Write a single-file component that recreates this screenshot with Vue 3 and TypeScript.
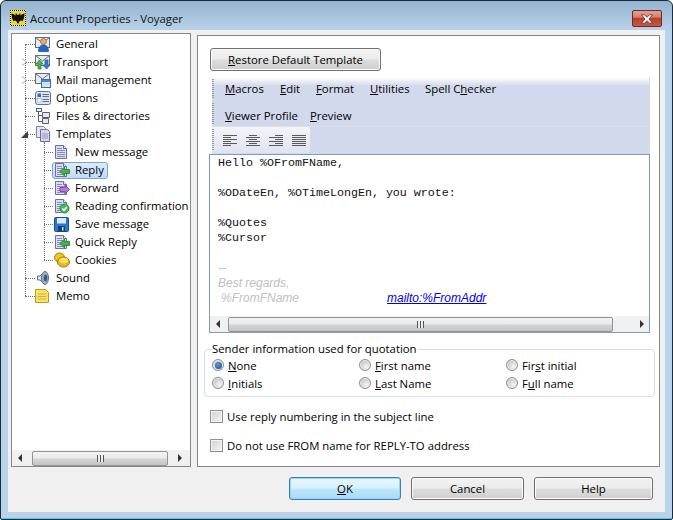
<script setup lang="ts">
interface Row { label: string; icon: string; level: number; arrow?: 'closed' | 'open'; selected?: boolean }
const rows: Row[] = [
  { label: 'General', icon: 'general', level: 0 },
  { label: 'Transport', icon: 'transport', level: 0, arrow: 'closed' },
  { label: 'Mail management', icon: 'mail', level: 0, arrow: 'closed' },
  { label: 'Options', icon: 'options', level: 0 },
  { label: 'Files & directories', icon: 'files', level: 0 },
  { label: 'Templates', icon: 'templates', level: 0, arrow: 'open' },
  { label: 'New message', icon: 'new', level: 1 },
  { label: 'Reply', icon: 'reply', level: 1, selected: true },
  { label: 'Forward', icon: 'forward', level: 1 },
  { label: 'Reading confirmation', icon: 'confirm', level: 1 },
  { label: 'Save message', icon: 'save', level: 1 },
  { label: 'Quick Reply', icon: 'quick', level: 1 },
  { label: 'Cookies', icon: 'cookies', level: 1 },
  { label: 'Sound', icon: 'sound', level: 0 },
  { label: 'Memo', icon: 'memo', level: 0 },
]
const docIcons = ['new', 'reply', 'forward', 'confirm', 'quick']
const alignments = [
  [14, 8, 14, 8, 14, 8],
  [8, 14, 8, 14, 8, 14],
  [8, 14, 8, 14, 8, 14],
  [14, 14, 14, 14, 14, 14],
]
const alignX = [0, 1, 2, 0]
</script>

<template>
  <div class="window">
    <header class="titlebar">
      <svg class="appicon" width="16" height="16" viewBox="0 0 16 16">
        <rect width="16" height="16" fill="#fff" />
        <path d="M0 0h1v1H0zM2 0h1v1H2zM4 0h1v1H4zM6 0h1v1H6zM8 0h1v1H8zM10 0h1v1h-1zM12 0h1v1h-1zM14 0h1v1h-1zM0 2h1v1H0zM0 4h1v1H0zM0 6h1v1H0zM0 8h1v1H0zM0 10h1v1H0zM0 12h1v1H0zM0 14h1v1H0zM15 1h1v1h-1zM15 3h1v1h-1zM15 5h1v1h-1zM15 7h1v1h-1zM15 9h1v1h-1zM15 11h1v1h-1zM15 13h1v1h-1zM15 15h1v1h-1zM1 15h1v1H1zM3 15h1v1H3zM5 15h1v1H5zM7 15h1v1H7zM9 15h1v1H9zM11 15h1v1h-1zM13 15h1v1h-1z" fill="#1a1a1a" />
        <rect x="1" y="1" width="14" height="14" fill="#f0d81c" />
        <path d="M1.500 3.500c2 0 3 1 3.800 2.200L6 2.800l1 2h2l1-2 .7 2.900c.8-1.200 1.800-2.200 3.800-2.200 0 3.800-1 6-2 7.700-1-.8-2-.8-2.800 0L8 14l-1.700-2.800c-.8-.8-1.800-.8-2.800 0-1-1.700-2-3.900-2-7.700z" fill="#111" />
      </svg>
      <span class="title">Account Properties - Voyager</span>
      <span class="close">
        <svg width="14" height="10" viewBox="0 0 14 10">
          <path d="M1.500 .8h3L7 3.300 9.500 .8h3L9 5l3.500 4.200h-3L7 6.700 4.500 9.200h-3L5 5z" fill="#fff" stroke="#5a2a28" stroke-width=".8" />
        </svg>
      </span>
    </header>

    <div class="client">
      <div class="panes">
        <aside class="tree">
          <div class="tree-rows">
            <span class="vline vline-root"></span>
            <span class="vline vline-child"></span>
            <div v-for="r in rows" :key="r.label" class="row" :class="{ child: r.level === 1 }">
              <span class="hline"></span>
              <span v-if="r.arrow" class="arrow" :class="r.arrow"></span>
              <span class="item" :class="{ selected: r.selected }">
                <svg class="ico" width="16" height="16" viewBox="0 0 16 16">
                  <g v-if="docIcons.includes(r.icon)">
                    <path d="M1.500 1.500h8l3 3v10h-11z" fill="#dcdcf0" stroke="#6b6f9c" />
                    <path d="M9.500 1.500v3h3" fill="#f4f4fb" stroke="#6b6f9c" />
                    <path d="M3 4.500h5M3 6.500h8M3 8.500h8M3 10.500h8M3 12.500h8" stroke="#8a8db8" />
                  </g>
                  <path v-if="r.icon === 'reply' || r.icon === 'quick'" d="M6 9.500l4.500-4.500v2.500H15.500v4h-5v2.500z" fill="#3fb53f" stroke="#1e7a2a" stroke-width=".8" />
                  <path v-if="r.icon === 'forward'" d="M15.500 9.500L11 5v2.500H6v4h5v2.500z" fill="#b678d8" stroke="#75389a" stroke-width=".8" />
                  <g v-if="r.icon === 'confirm'">
                    <circle cx="10.500" cy="10.500" r="4.500" fill="#4cb85a" stroke="#2a8a3c" />
                    <path d="M8.300 10.500l1.700 1.800 2.900-3.300" fill="none" stroke="#fff" stroke-width="1.500" />
                  </g>
                  <g v-if="r.icon === 'save'">
                    <rect x=".5" y="1.500" width="14" height="14" rx="1" fill="#2a78c8" stroke="#174f92" />
                    <rect x="3" y="2" width="9" height="5.500" fill="#dbe9f8" />
                    <rect x="4" y="10" width="7" height="5.500" fill="#0f3f80" />
                    <rect x="8" y="11" width="1.500" height="3.500" fill="#cde" />
                  </g>
                  <g v-if="r.icon === 'cookies'">
                    <ellipse cx="5.500" cy="5.500" rx="5" ry="4.500" fill="#f3c61e" stroke="#a5780a" />
                    <ellipse cx="9.500" cy="10" rx="6" ry="5" fill="#eeb911" stroke="#a5780a" />
                    <ellipse cx="9.500" cy="8.500" rx="4.500" ry="2.800" fill="#fbe06a" />
                  </g>
                  <g v-if="r.icon === 'sound'">
                    <path d="M2.500 6h2.500l5-4.500v13L5 10H2.500z" fill="#dde5ee" stroke="#5b6f8c" />
                    <ellipse cx="10" cy="8" rx="3.500" ry="6.500" fill="#9fb2c8" stroke="#5b6f8c" />
                    <ellipse cx="10.500" cy="8" rx="1.800" ry="3.500" fill="#3d5a80" />
                  </g>
                  <g v-if="r.icon === 'memo'">
                    <path d="M.5 1.500h10l3 3v10H.5z" fill="#fbe26a" stroke="#c09a18" />
                    <path d="M2.500 6h9M2.500 8.500h9M2.500 11h9" stroke="#d8b030" />
                  </g>
                  <g v-if="r.icon === 'options'">
                    <rect x=".5" y="1.500" width="15" height="13" rx="2" fill="#dbe4ef" stroke="#5c7290" />
                    <rect x="2.500" y="3.500" width="3.500" height="3.500" fill="#3a70b8" />
                    <rect x="2.500" y="8.500" width="3.500" height="3.500" fill="#fff" stroke="#8aa" stroke-width=".5" />
                    <path d="M7.500 4.500h6.500M7.500 6.500h6.500M7.500 9.500h6.500M7.500 11.500h6.500" stroke="#5c7290" />
                  </g>
                  <g v-if="r.icon === 'files'">
                    <path d="M3.500 2v11.500h4M3.500 7.500h4" fill="none" stroke="#58606e" />
                    <rect x="1.500" y="0.500" width="5" height="3" fill="#eef1f6" stroke="#58606e" />
                    <path d="M7.500 4.500h7v5h-7z" fill="#e3e8f1" stroke="#58606e" />
                    <path d="M7.500 10.500h6v5h-6z" fill="#e3e8f1" stroke="#58606e" />
                  </g>
                  <g v-if="r.icon === 'templates'">
                    <path d="M1.500 .5h7l2 2v9h-9z" fill="#e7e7f4" stroke="#7a7ea6" />
                    <path d="M5.500 3.500h7l2 2v10h-9z" fill="#d6d7ec" stroke="#6b6f9c" />
                    <path d="M7 8h6M7 10h6M7 12h6" stroke="#9497c0" />
                  </g>
                  <g v-if="r.icon === 'general' || r.icon === 'transport' || r.icon === 'mail'">
                    <rect x=".5" y="1.500" width="14" height="10" fill="#e7ebf1" stroke="#626e7e" />
                    <path d="M.5 1.500l7 5.500 7-5.500" fill="none" stroke="#626e7e" />
                  </g>
                  <g v-if="r.icon === 'general'">
                    <circle cx="8.500" cy="5.500" r="3" fill="#eea765" stroke="#9a5a20" stroke-width=".7" />
                    <path d="M3.500 15.500c0-4.500 2-6.500 5-6.500s5 2 5 6.500z" fill="#1d6cc4" stroke="#124a8a" stroke-width=".7" />
                  </g>
                  <g v-if="r.icon === 'transport'">
                    <path d="M1 10l3.500-4L8 10H6v5H3v-5z" fill="#4cbb3a" stroke="#237a20" stroke-width=".7" />
                    <path d="M15 11l-3.500 4L8 11h2V6h3v5z" fill="#2f80d6" stroke="#1a5498" stroke-width=".7" />
                  </g>
                  <g v-if="r.icon === 'mail'">
                    <rect x="6.500" y="7.500" width="9" height="8" fill="#cfe2f6" stroke="#3e6ea8" />
                    <rect x="7" y="8" width="8" height="2" fill="#4f88c8" />
                  </g>
                </svg>
                <span class="lbl">{{ r.label }}</span>
              </span>
            </div>
          </div>
          <div class="hscroll">
            <span class="sarrow left"></span>
            <span class="thumb tree-thumb"><span class="grip"></span></span>
            <span class="sarrow right"></span>
          </div>
        </aside>

        <section class="panel">
          <button class="btn restore"><u>R</u>estore Default Template</button>

          <div class="bands">
            <nav class="band menu1">
              <span class="m m-macros"><u>M</u>acros</span>
              <span class="m m-edit"><u>E</u>dit</span>
              <span class="m m-format"><u>F</u>ormat</span>
              <span class="m m-util"><u>U</u>tilities</span>
              <span class="m">Spell C<u>h</u>ecker</span>
            </nav>
            <nav class="band menu2">
              <span class="m m-viewer"><u>V</u>iewer Profile</span>
              <span class="m"><u>P</u>review</span>
            </nav>
            <div class="toolband">
              <div class="toolbar">
                <svg v-for="(a, i) in alignments" :key="i" width="14" height="12" viewBox="0 0 14 12" shape-rendering="crispEdges">
                  <rect v-for="(w, j) in a" :key="j" :x="alignX[i] === 0 ? 0 : alignX[i] === 1 ? (14 - w) / 2 : 14 - w" :y="j * 2 + 1" :width="w" height="1" fill="#5a5a5a" />
                </svg>
              </div>
            </div>
          </div>

          <div class="editor">
            <div class="doc">
              <pre class="code">Hello %OFromFName,

%ODateEn, %OTimeLongEn, you wrote:

%Quotes
%Cursor</pre>
              <div class="sig">
                <div>--</div>
                <div>Best regards,</div>
                <div class="sigline"><span class="signame">%FromFName</span><a class="mailto">mailto:%FromAddr</a></div>
              </div>
            </div>
            <div class="hscroll editor-scroll">
              <span class="sarrow left"></span>
              <span class="thumb editor-thumb"><span class="grip"></span></span>
              <span class="sarrow right"></span>
            </div>
          </div>

          <fieldset class="group">
            <legend>Sender information used for quotation</legend>
            <div class="radios">
              <label class="opt"><span class="radio on"></span><span><u>N</u>one</span></label>
              <label class="opt"><span class="radio"></span><span><u>F</u>irst name</span></label>
              <label class="opt"><span class="radio"></span><span>Fir<u>s</u>t initial</span></label>
              <label class="opt"><span class="radio"></span><span><u>I</u>nitials</span></label>
              <label class="opt"><span class="radio"></span><span><u>L</u>ast Name</span></label>
              <label class="opt"><span class="radio"></span><span>F<u>u</u>ll name</span></label>
            </div>
          </fieldset>

          <label class="check first"><span class="box"></span>Use reply numbering in the subject line</label>
          <label class="check second"><span class="box"></span>Do not use FROM name for REPLY-TO address</label>
        </section>
      </div>

      <footer class="actions">
        <button class="btn action ok"><u>O</u>K</button>
        <button class="btn action cancel">Cancel</button>
        <button class="btn action help">Help</button>
      </footer>
    </div>
  </div>
</template>

<style>
html, body { margin: 0; background: #fff; }
</style>

<style scoped>
.window {
  width: 673px;
  height: 520px;
  box-sizing: border-box;
  border: 1px solid #1c2b38;
  border-radius: 6px 6px 2px 2px;
  padding: 0 7px 7px;
  background: linear-gradient(180deg, #94b3d0 0, #b9d3ea 30px, #b9d3ea 100%);
  box-shadow: inset 0 -1px 0 #3fd0e8;
  font-family: "Open Sans", "Noto Sans", sans-serif;
  font-size: 11.35px;
  color: #000;
  overflow: hidden;
}
.titlebar {
  height: 29px;
  display: flex;
  align-items: center;
  position: relative;
}
.appicon { margin: 5px 0 0 2px; }
.title { margin: 6px 0 0 4px; color: #111; }
.close {
  margin-left: auto;
  margin-right: 3px;
  margin-top: 6px;
  width: 30px;
  height: 17px;
  box-sizing: border-box;
  border: 1px solid #6d2a28;
  border-radius: 2px;
  background: linear-gradient(180deg, #e4a092 0, #d9806e 40%, #b8402c 50%, #c85a44 100%);
  display: flex;
  align-items: center;
  justify-content: center;
}
.client {
  height: 482px;
  background: #f0f0f0;
  padding: 3px 0 0 3px;
  box-sizing: border-box;
}
.panes { display: flex; align-items: flex-start; gap: 6px; }
.tree {
  width: 180px;
  height: 434px;
  box-sizing: border-box;
  border: 1px solid #828790;
  background: #fff;
  display: flex;
  flex-direction: column;
}
.tree-rows {
  flex: 1;
  padding-top: 1px;
  position: relative;
}
.vline { position: absolute; border-left: 1px dotted #707070; width: 0; }
.vline-root { left: 13px; top: 10px; height: 252px; }
.vline-child { left: 32px; top: 108px; height: 118px; }
.row {
  height: 18px;
  padding-left: 22px;
  display: flex;
  align-items: center;
  position: relative;
  white-space: nowrap;
}
.row.child { padding-left: 40px; }
.hline {
  position: absolute;
  left: 13px;
  width: 10px;
  top: 9px;
  border-top: 1px dotted #707070;
}
.child .hline { left: 32px; width: 9px; }
.arrow {
  position: absolute;
  z-index: 1;
  background: #fff;
}
.arrow.closed {
  left: 10px;
  top: 5px;
  width: 0;
  height: 0;
  border-left: 5px solid #a6a6a6;
  border-top: 4px solid transparent;
  border-bottom: 4px solid transparent;
  background: transparent;
}
.arrow.closed::after {
  content: "";
  position: absolute;
  left: -5px;
  top: -3px;
  border-left: 4px solid #fff;
  border-top: 3px solid transparent;
  border-bottom: 3px solid transparent;
}
.arrow.open {
  left: 9px;
  top: 6px;
  width: 0;
  height: 0;
  border-right: 7px solid #404040;
  border-top: 7px solid transparent;
  background: transparent;
}
.item {
  display: flex;
  align-items: center;
  height: 17px;
  box-sizing: border-box;
  border: 1px solid transparent;
  border-radius: 3px;
  padding: 0 3px 0 0;
  gap: 5px;
  position: relative;
  z-index: 1;
}
.child .item { padding-left: 1px; }
.item.selected {
  border-color: #7da2ce;
  background: linear-gradient(180deg, #dcebfc, #c1dbfc);
}
.lbl { position: relative; top: -.5px; }
.ico { flex: none; background: #fff; }
.selected .ico { background: transparent; }
.hscroll {
  height: 16px;
  background: #f0f0f0;
  display: flex;
  align-items: center;
  position: relative;
  flex: none;
}
.sarrow { width: 0; height: 0; flex: none; border-top: 4px solid transparent; border-bottom: 4px solid transparent; }
.sarrow.left { border-right: 4px solid #333; }
.sarrow.right { border-left: 4px solid #333; }
.thumb {
  height: 15px;
  box-sizing: border-box;
  border: 1px solid #959595;
  border-radius: 2px;
  background: linear-gradient(180deg, #f2f2f2 0, #ebebeb 45%, #d5d5d5 55%, #c5c5c5 100%);
  display: flex;
  align-items: center;
  justify-content: center;
  flex: none;
}
.grip {
  width: 7px;
  height: 7px;
  background: repeating-linear-gradient(90deg, #555 0 1px, #eee 1px 3px);
}
.tree .sarrow.left { margin-left: 6px; }
.tree-thumb { width: 136px; margin-left: 10px; }
.tree .sarrow.right { margin-left: 10px; }
.panel {
  width: 463px;
  height: 432px;
  margin-top: 2px;
  box-sizing: border-box;
  border: 1px solid #828790;
  background: #fff;
  padding: 12px 0 0 12px;
}
.btn {
  font: inherit;
  color: #000;
  border: 1px solid #707070;
  border-radius: 3px;
  box-shadow: inset 0 0 0 1px #fbfbfb;
  background: linear-gradient(180deg, #f3f3f3 0, #ebebeb 48%, #dddddd 52%, #cfcfcf 100%);
  padding: 0;
  display: block;
}
.restore { width: 171px; height: 23px; }
.bands { width: 437px; margin: 6px 0 0 2px; background: #d3d9ec; border-right: 1px solid #dcdcdc; }
.band { display: flex; align-items: center; padding-left: 13px; box-sizing: border-box; position: relative; }
.band::before, .toolbar::before {
  content: "";
  position: absolute;
  left: 0;
  top: 2px;
  bottom: 2px;
  width: 2px;
  background: repeating-linear-gradient(180deg, #9a9a9a 0 1px, transparent 1px 2px);
}
.menu1 { height: 24px; background: linear-gradient(180deg, #fff 0, #d3d9ec 9px); align-items: flex-end; padding-bottom: 4px; }
.menu2 { height: 26px; border-bottom: 1px solid #dedfe4; padding-top: 5px; }
.m { white-space: nowrap; line-height: 16px; }
.m-macros { width: 55px; }
.m-edit { width: 36px; }
.m-format { width: 54px; }
.m-util { width: 55px; }
.m-viewer { width: 85px; }
.toolband { height: 27px; }
.toolbar {
  width: 99px;
  height: 26px;
  box-sizing: border-box;
  padding-left: 11px;
  display: flex;
  align-items: center;
  gap: 9px;
  background: linear-gradient(180deg, #f3f4f9, #dfe3f1);
  border-right: 1px solid #d8d8d8;
  position: relative;
}
.editor {
  width: 441px;
  height: 179px;
  margin-left: -1px;
  box-sizing: border-box;
  border: 1px solid #7f9db9;
  display: flex;
  flex-direction: column;
}
.doc { flex: 1; padding: 1px 0 0 8px; min-height: 0; }
.code {
  margin: 0;
  font-family: "Liberation Mono", monospace;
  font-size: 11.67px;
  line-height: 15px;
  color: #111;
  height: 105px;
}
.sig {
  font-family: "Liberation Sans", Arial, sans-serif;
  font-style: italic;
  font-size: 12px;
  line-height: 15px;
  color: #c0c0c0;
}
.sigline { display: flex; }
.signame { width: 169px; padding-left: 3px; box-sizing: border-box; }
.mailto { color: #0000e8; text-decoration: underline; }
.editor-scroll { height: 16px; background: #f0f0f0; }
.editor-scroll .sarrow.left { margin-left: 6px; }
.editor-thumb { width: 385px; margin-left: 8px; }
.editor-scroll .sarrow.right { margin-left: 27px; }
.group {
  width: 451px;
  height: 55px;
  box-sizing: border-box;
  margin: 9px 0 0 -6px;
  padding: 0 0 0 7px;
  border: 1px solid #d5dfe5;
  border-radius: 4px;
  min-inline-size: 0;
}
.group legend { padding: 0 1px 0 0; margin-left: 0; line-height: 14px; }
.radios {
  display: grid;
  grid-template-columns: 147px 147px 1fr;
  grid-auto-rows: 18px;
}
.opt { display: flex; align-items: center; gap: 4px; }
.radio {
  width: 12px;
  height: 12px;
  box-sizing: border-box;
  border-radius: 50%;
  border: 1px solid #8e8f8f;
  background: radial-gradient(circle at 62% 68%, #f6f6f6 0, #d0d0d0 55%, #a8a8a8 100%);
  box-shadow: inset 0 0 0 1px #f0f0f0;
  position: relative;
  flex: none;
}
.radio.on::after {
  content: "";
  position: absolute;
  left: 1.5px;
  top: 1.5px;
  width: 7px;
  height: 7px;
  border-radius: 50%;
  background: radial-gradient(circle at 40% 35%, #5a9fd8, #0b4488);
}
.check { display: flex; align-items: center; gap: 4px; height: 16px; }
.check.first { margin-top: 11px; }
.check.second { margin-top: 13px; }
.box {
  width: 13px;
  height: 13px;
  box-sizing: border-box;
  border: 1px solid #8e8f8f;
  background: linear-gradient(135deg, #cfcfcf, #f6f6f6);
  box-shadow: inset 0 0 0 1px #f4f4f4;
  flex: none;
}
.actions { display: flex; margin: 10px 0 0 278px; }
.action { height: 23px; }
.ok {
  width: 112px;
  border-color: #3c7fb1;
  box-shadow: inset 0 0 0 1px #8fd8f4;
  background: linear-gradient(180deg, #eaf6fd 0, #d9f0fc 48%, #bee6fd 52%, #a7d9f5 100%);
}
.cancel { width: 113px; margin-left: 10px; }
.help { width: 119px; margin-left: 10px; }
</style>
